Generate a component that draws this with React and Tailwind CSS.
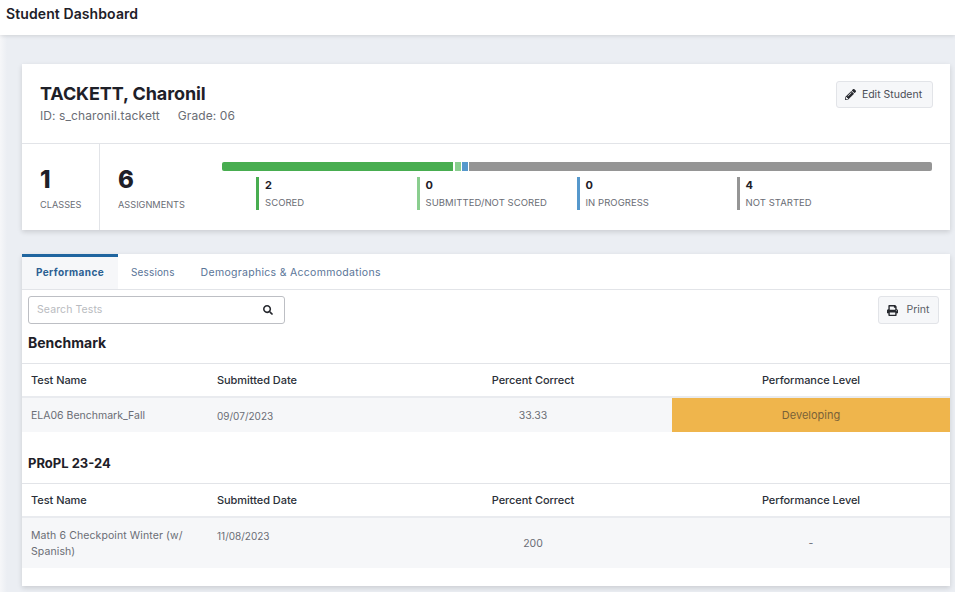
import { FaPencilAlt, FaPrint, FaSearch } from "react-icons/fa";

const legend = [
  { value: 2, label: "SCORED", color: "border-[#48ad50]" },
  { value: 0, label: "SUBMITTED/NOT SCORED", color: "border-[#8ace8f]" },
  { value: 0, label: "IN PROGRESS", color: "border-[#5698cc]" },
  { value: 4, label: "NOT STARTED", color: "border-[#959595]" },
];

function TestTable({ name, date, percent, level, rowHeight }) {
  return (
    <div>
      <div className="grid grid-cols-[186px_186px_278px_278px] h-[35px] items-center border-t border-[#e2e4e8] border-b-2 border-b-[#e9ebef] text-[11px] tracking-[-0.05px] text-[#2b2f38] font-medium">
        <div className="pl-[9px]">Test Name</div>
        <div className="pl-[9px]">Submitted Date</div>
        <div className="text-center">Percent Correct</div>
        <div className="text-center">Performance Level</div>
      </div>
      <div className={`grid grid-cols-[186px_186px_278px_278px] bg-[#f6f7f9] text-[10.5px] text-[#6a6d75] ${rowHeight}`}>
        {name}
        {date}
        <div className="flex items-center justify-center pt-[2px]">{percent}</div>
        {level}
      </div>
    </div>
  );
}

export default function App() {
  return (
    <div className="h-[592px] overflow-hidden bg-[#ebeef3] bg-[linear-gradient(to_right,#f6f7f9,#ebeef3_7px)] font-['Inter',sans-serif] text-[#1e2028]">
      <header className="h-[35px] bg-white shadow-[0_1px_4px_rgba(0,0,0,0.12)] pl-[6px] pt-[5px] text-[14px] leading-[18px] font-semibold tracking-[0.1px]">
        Student Dashboard
      </header>

      <div className="pl-[22px] pr-[5px] pt-[29px]">
        <section className="bg-white h-[166px] shadow-[0_2px_5px_rgba(0,0,0,0.14)]">
          <div className="h-[80px] border-b border-[#e2e4e8] flex justify-between pl-[18px] pr-[17px] pt-[17px]">
            <div className="pt-[1px]">
              <h1 className="text-[18px] leading-[24px] font-bold tracking-[-0.1px]">TACKETT, Charonil</h1>
              <div className="flex gap-[18px] text-[12px] leading-[20px] tracking-[0.1px] text-[#6a6d75]">
                <span>ID: s_charonil.tackett</span>
                <span>Grade: 06</span>
              </div>
            </div>
            <button className="h-[27px] w-[97px] pr-[2px] flex items-center justify-center gap-[6px] rounded-[3px] border border-[#e2e4e8] bg-[#f6f7f9] text-[10.5px] text-[#4b4e56]">
              <FaPencilAlt className="text-[11px] text-[#26282e]" />
              Edit Student
            </button>
          </div>

          <div className="flex h-[86px]">
            <div className="w-[78px] border-r border-[#e2e4e8] pl-[18px] pt-[19px]">
              <div className="text-[24px] leading-[34px] font-extrabold">1</div>
              <div className="text-[9.2px] leading-[14px] mt-[1px] text-[#6a6d75]">CLASSES</div>
            </div>
            <div className="w-[122px] pl-[18px] pt-[19px]">
              <div className="text-[24px] leading-[34px] font-extrabold">6</div>
              <div className="text-[9.2px] leading-[14px] mt-[1px] text-[#6a6d75]">ASSIGNMENTS</div>
            </div>
            <div className="w-[710px] pt-[18px]">
              <div className="flex h-[9px]">
                <div className="w-[231px] bg-[#48ad50] rounded-l-[2px]" />
                <div className="w-[6px] ml-[2px] bg-[#8ace8f]" />
                <div className="w-[6px] ml-[1px] bg-[#5698cc]" />
                <div className="flex-1 ml-[1px] bg-[#959595] rounded-r-[2px]" />
              </div>
              <div className="grid grid-cols-[160.5px_160px_160px_160px] ml-[34px] mt-[6px]">
                {legend.map((item) => (
                  <div key={item.label} className={`h-[33px] border-l-[3px] ${item.color} pl-[6px] pt-[1px]`}>
                    <div className="text-[11px] leading-[15px] font-bold">{item.value}</div>
                    <div className="text-[9.5px] leading-[14px] mt-[3px] tracking-[0.05px] text-[#6a6d75] whitespace-nowrap">{item.label}</div>
                  </div>
                ))}
              </div>
            </div>
          </div>
        </section>

        <section className="bg-white h-[332px] mt-[24px] shadow-[0_2px_5px_rgba(0,0,0,0.14)]">
          <div className="flex h-[36px] border-b border-[#e2e4e8] text-[10px]">
            <div className="w-[96px] pb-[1px] flex items-center justify-center bg-[#f6f7f9] border-t-[3px] border-[#1f659f] font-bold tracking-[0.4px] text-[#2c5f92]">
              Performance
            </div>
            <div className="ml-[13px] pt-[2px] flex items-center tracking-[0.15px] text-[#5a7598]">Sessions</div>
            <div className="ml-[26px] pt-[2px] flex items-center text-[10.5px] tracking-[0.3px] text-[#5a7598]">Demographics &amp; Accommodations</div>
          </div>

          <div className="flex justify-between pl-[6px] pr-[11px] pt-[6px]">
            <div className="w-[257px] h-[28px] flex items-center justify-between pl-[8px] pr-[11px] rounded-[3px] border border-[#bdbfc4] text-[10.5px] tracking-[0.1px] text-[#b9bbc0]">
              Search Tests
              <FaSearch className="text-[10px] text-[#26282e]" />
            </div>
            <button className="w-[61px] h-[28px] flex items-center justify-center gap-[8px] rounded-[3px] border border-[#e2e4e8] bg-[#f6f7f9] text-[10.5px] text-[#5a5d65]">
              <FaPrint className="text-[11px] text-[#26282e]" />
              Print
            </button>
          </div>

          <h2 className="pl-[6px] mt-[10px] h-[29px] text-[14px] leading-[18px] font-bold">Benchmark</h2>
          <TestTable
            rowHeight="h-[34px]"
            name={<div className="pl-[9px] pt-[2px] flex items-center">ELA06 Benchmark_Fall</div>}
            date={<div className="pl-[9px] pt-[2px] flex items-center text-[10px]">09/07/2023</div>}
            percent="33.33"
            level={<div className="bg-[#efb54c] flex items-center justify-center text-[11px] text-[#7a6238]">Developing</div>}
          />

          <h2 className="pl-[6px] mt-[22px] h-[29px] text-[13px] leading-[18px] font-bold">PRoPL 23-24</h2>
          <TestTable
            rowHeight="h-[50px]"
            name={<div className="pl-[9px] pr-[20px] pt-[10px] leading-[16px] tracking-[0.1px]">Math 6 Checkpoint Winter (w/ Spanish)</div>}
            date={<div className="pl-[9px] pt-[10px] leading-[16px] text-[10px]">11/08/2023</div>}
            percent="200"
            level={<div className="flex items-center justify-center pt-[2px]">-</div>}
          />
        </section>
      </div>
    </div>
  );
}
